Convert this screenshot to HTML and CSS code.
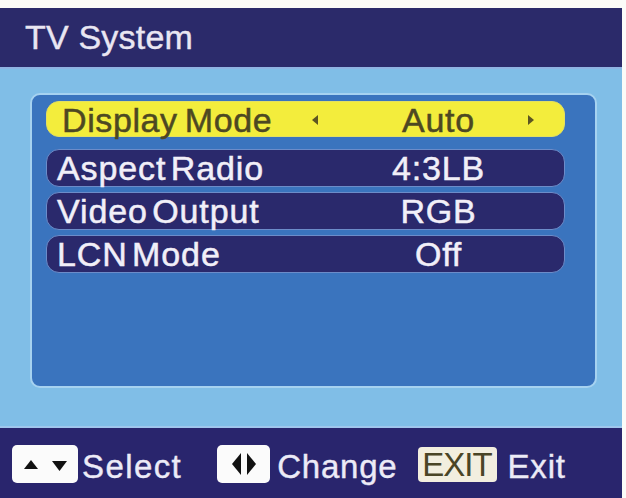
FILE: index.html
```html
<!DOCTYPE html>
<html>
<head>
<meta charset="utf-8">
<link rel="stylesheet" href="styles.css">
</head>
<body>
<div class="screen">
  <div class="titlebar">TV System</div>
  <div class="panel">
    <div class="menu">
      <div class="row active">
        <span class="label">Display Mode</span>
        <span class="arrow"><svg width="8" height="12" viewBox="0 0 8 12"><path d="M7 1 L1 6 L7 11 Z" fill="#5c5522"/></svg></span>
        <span class="value">Auto</span>
        <span class="arrow"><svg width="8" height="12" viewBox="0 0 8 12"><path d="M1 1 L7 6 L1 11 Z" fill="#5c5522"/></svg></span>
      </div>
      <div class="row">
        <span class="label">Aspect Radio</span>
        <span class="arrow"></span>
        <span class="value">4:3LB</span>
        <span class="arrow"></span>
      </div>
      <div class="row">
        <span class="label">Video Output</span>
        <span class="arrow"></span>
        <span class="value">RGB</span>
        <span class="arrow"></span>
      </div>
      <div class="row">
        <span class="label">LCN Mode</span>
        <span class="arrow"></span>
        <span class="value">Off</span>
        <span class="arrow"></span>
      </div>
    </div>
  </div>
  <div class="footer">
    <span class="key key-ud">
      <svg width="54" height="24" viewBox="0 0 54 24"><path d="M6 17 L13 8 L20 17 Z" fill="#111"/><path d="M34 9 L49 9 L41.5 19 Z" fill="#111"/></svg>
    </span>
    <span class="hint sel">Select</span>
    <span class="key key-lr">
      <svg width="40" height="28" viewBox="0 0 40 28"><path d="M17 3 L8 14 L17 25 Z" fill="#111"/><path d="M23 3 L32 14 L23 25 Z" fill="#111"/></svg>
    </span>
    <span class="hint chg">Change</span>
    <span class="key key-exit">EXIT</span>
    <span class="hint ext">Exit</span>
  </div>
</div>
</body>
</html>
```

FILE: styles.css
```css
html, body {
  margin: 0;
  padding: 0;
  background: #fbfbf8;
}
body {
  padding-top: 8px;
  font-family: "Liberation Sans", Arial, sans-serif;
}
.screen {
  width: 622px;
  display: flex;
  flex-direction: column;
}
.titlebar {
  height: 61px;
  box-sizing: border-box;
  background: #2b2a6a;
  color: #e9e6f2;
  font-size: 34px;
  line-height: 58px;
  padding-left: 25px;
  letter-spacing: 0.2px;
  border-bottom: 2px solid #8fb3e2;
  -webkit-text-stroke: 0.4px #e9e6f2;
}
.panel {
  height: 357px;
  box-sizing: border-box;
  background: #80bee7;
  padding: 24px 25px 38px 30px;
}
.menu {
  height: 100%;
  box-sizing: border-box;
  background: #3a74be;
  border: 2px solid #a6d2f0;
  border-radius: 10px;
  padding: 6px 30px 0 14px;
  display: flex;
  flex-direction: column;
  gap: 5px;
}
.row {
  height: 38px;
  box-sizing: border-box;
  display: grid;
  grid-template-columns: 258px 20px 1fr 20px 23px;
  align-items: center;
  background: #2a296c;
  border: 1px solid #6c8cc9;
  border-radius: 13px;
  color: #f1eff8;
  font-size: 34px;
  line-height: 36px;
  -webkit-text-stroke: 0.5px #f1eff8;
}
.row.active {
  height: 36px;
  margin-bottom: 7px;
  background: #f3ed3c;
  border-color: #e4e060;
  color: #4d4822;
  -webkit-text-stroke: 0.5px #4d4822;
}
.label {
  padding-left: 10px;
  letter-spacing: 0.9px;
  word-spacing: -6px;
  white-space: nowrap;
}
.row.active .label {
  padding-left: 15px;
  letter-spacing: 0.6px;
  word-spacing: -3px;
}
.arrow {
  display: flex;
  justify-content: center;
  align-items: center;
}
.value {
  padding-left: 31px;
  text-align: center;
  white-space: nowrap;
  letter-spacing: 0.8px;
}
.footer {
  height: 72px;
  box-sizing: border-box;
  background: #29256d;
  border-top: 2px solid #9fc6ec;
  display: flex;
  align-items: center;
  padding-left: 12px;
  padding-top: 2px;
}
.key {
  background: #fbfbfb;
  border-radius: 5px;
  display: flex;
  align-items: center;
  justify-content: center;
}
.key-ud {
  width: 66px;
  height: 38px;
}
.key-lr {
  width: 53px;
  height: 38px;
  margin-left: 35px;
}
.key-exit {
  width: 79px;
  height: 35px;
  margin-left: 20px;
  background: #f2eedf;
  color: #4a4526;
  font-size: 33px;
  line-height: 35px;
  letter-spacing: -1px;
  border-radius: 4px;
}
.hint {
  color: #ecebf7;
  font-size: 33px;
  line-height: 40px;
  margin-left: 4px;
  letter-spacing: 0.8px;
  padding-top: 6px;
  -webkit-text-stroke: 0.4px #ecebf7;
}
.hint.sel {
  letter-spacing: 1.4px;
}
.hint.chg {
  margin-left: 7px;
}
.hint.ext {
  margin-left: 11px;
}
```
